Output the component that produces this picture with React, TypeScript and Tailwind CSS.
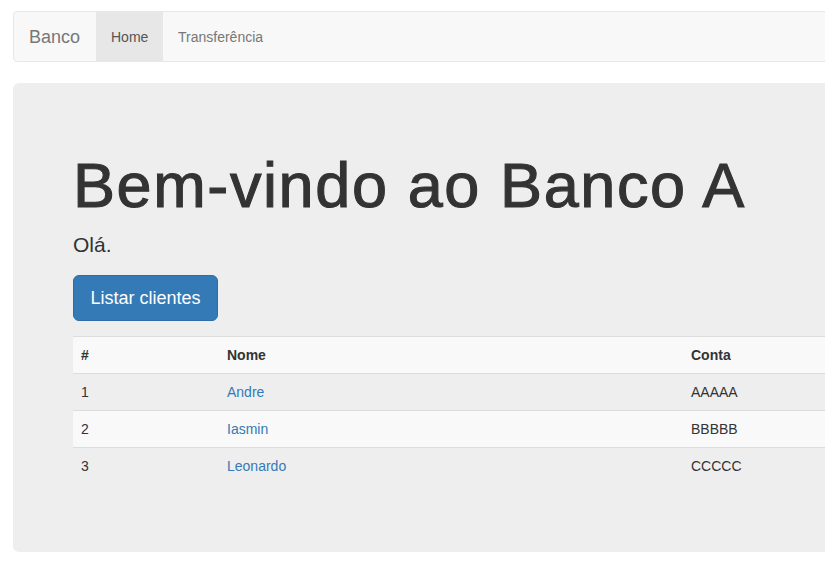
const clientes = [
  { id: 1, nome: "Andre", conta: "AAAAA" },
  { id: 2, nome: "Iasmin", conta: "BBBBB" },
  { id: 3, nome: "Leonardo", conta: "CCCCC" },
];

const Navbar = () => {
  return (
    <nav className="flex h-[51px] rounded-[4px] border border-[#e7e7e7] bg-[#f8f8f8]">
      <a className="w-[82px] px-[15px] pt-[2px] text-[18px] leading-[47px] text-[#777]">Banco</a>
      <ul className="flex">
        <li className="w-[67px] bg-[#e7e7e7] px-[15px] pt-[2px] text-[14px] leading-[47px] text-[#555]">Home</li>
        <li className="px-[15px] pt-[2px] text-[14px] leading-[47px] text-[#777]">Transferência</li>
      </ul>
    </nav>
  );
};

export default function App() {
  return (
    <div
      className="h-[581px] w-full overflow-hidden bg-white text-[14px] text-[#333]"
      style={{ fontFamily: '"Liberation Sans", Arial, sans-serif' }}
    >
      <div className="ml-[13px] w-[1140px] pt-[11px]">
        <Navbar />
        <div className="mt-[21px] rounded-[6px] bg-[#eee] px-[60px] pt-[48px] pb-[48px]">
          <h1 className="mt-[20px] mb-[10px] text-[63px] leading-[69px] font-normal tracking-[1.6px] [-webkit-text-stroke:1.1px_#333]">
            Bem-vindo ao Banco A
          </h1>
          <p className="mb-[15px] text-[21px] leading-[30px] font-light">Olá.</p>
          <p className="mb-[15px]">
            <button className="h-[46px] w-[145px] rounded-[6px] border border-[#2e6da4] bg-[#337ab7] px-[16px] text-[18px] leading-[24px] text-white">
              Listar clientes
            </button>
          </p>
          <table className="mb-[20px] w-full border-collapse text-left">
            <tbody>
              <tr className="bg-[#f9f9f9]">
                <th className="w-[146px] border-t border-[#ddd] p-[8px] leading-[20px] font-bold">#</th>
                <th className="w-[464px] border-t border-[#ddd] p-[8px] leading-[20px] font-bold">Nome</th>
                <th className="border-t border-[#ddd] p-[8px] leading-[20px] font-bold">Conta</th>
              </tr>
              {clientes.map((c, i) => (
                <tr key={c.id} className={i % 2 === 1 ? "bg-[#f9f9f9]" : ""}>
                  <td className="border-t border-[#ddd] p-[8px] leading-[20px]">{c.id}</td>
                  <td className="border-t border-[#ddd] p-[8px] leading-[20px]">
                    <a className="text-[#337ab7]">{c.nome}</a>
                  </td>
                  <td className="border-t border-[#ddd] p-[8px] leading-[20px]">{c.conta}</td>
                </tr>
              ))}
            </tbody>
          </table>
        </div>
      </div>
    </div>
  );
}
